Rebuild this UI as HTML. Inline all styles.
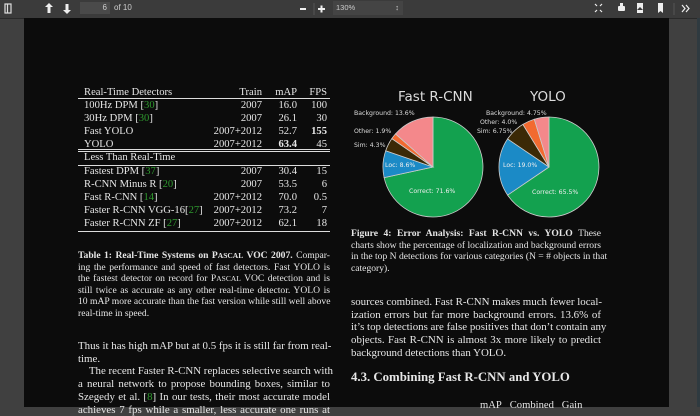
<!DOCTYPE html>
<html><head><style>
body{margin:0;width:700px;height:407px;overflow:hidden;background:#404040;font-family:"Liberation Serif",serif;color:#e6e6e6;position:relative}
#tb{position:absolute;left:0;top:0;width:700px;height:18px;background:#3b3b3b;border-bottom:1px solid #2a2a2a}
#pg{position:absolute;left:24px;top:18px;width:645px;height:389px;background:#0c0c0c}
.a{position:absolute;white-space:nowrap}
.t{font-size:10.6px;line-height:12.9px}
.r{text-align:right}
.g{color:#2f9a2f}
.hl{position:absolute;left:78px;width:252px;height:1px;background:#ddd}
.j div{text-align:justify;text-align-last:justify;white-space:nowrap}
.j div.l{text-align-last:left}
.cap{font-size:9.6px;line-height:11.6px}
.body{font-size:10.9px;line-height:12.7px}
</style></head><body>
<div id="tb">
<svg width="700" height="18" style="position:absolute;left:0;top:0">
<g fill="none" stroke="#ddd" stroke-width="1.2"><rect x="5" y="4" width="6" height="9"/><line x1="7.5" y1="4" x2="7.5" y2="13"/></g>
<g fill="#eee"><path d="M49 3l4 4h-2.5v6h-3v-6H45z"/><path d="M67 14l4-4h-2.5V4h-3v6H63z"/>
<rect x="300" y="8" width="6" height="2"/><rect x="318" y="8" width="7" height="2"/><rect x="320.5" y="5.5" width="2" height="7"/>
<rect x="618" y="6" width="7" height="5" rx="1"/><rect x="620" y="3" width="3" height="3"/>
<rect x="637" y="3" width="6" height="10"/><path d="M658 3h5v10l-2.5-2-2.5 2z"/>
<path d="M640 7l-3 3h6z" fill="#3b3b3b"/></g>
<g stroke="#eee" stroke-width="1.2" fill="none"><path d="M595 4l2 2M602 4l-2 2M595 12l2-2M602 12l-2-2"/><path d="M682 5l3 3.5-3 3.5M686 5l3 3.5-3 3.5"/></g>
<line x1="314" y1="3" x2="314" y2="15" stroke="#555"/><line x1="674" y1="3" x2="674" y2="15" stroke="#555"/>
</svg>
<div class="a" style="left:80px;top:2px;width:27px;height:12px;background:#4a4a4a;font:8px 'Liberation Sans',sans-serif;color:#ccc;text-align:right;padding-right:3px;line-height:12px">6</div>
<div class="a" style="left:114px;top:2px;font:8px 'Liberation Sans',sans-serif;color:#ccc;line-height:12px">of 10</div>
<div class="a" style="left:333px;top:1px;width:67px;height:14px;background:#444;font:7.5px 'Liberation Sans',sans-serif;color:#ccc;line-height:14px;padding-left:3px">130%<span style="position:absolute;right:4px">&#8597;</span></div>
</div>
<div id="pg"></div>
<div class="a" style="left:697px;top:18px;width:3px;height:389px;background:#2f3a40"></div>

<div class="hl" style="top:98px"></div>
<div class="hl" style="top:149px"></div><div class="hl" style="top:151px"></div>
<div class="hl" style="top:165px"></div>
<div class="hl" style="top:231px"></div>
<div class="a t" style="left:84px;top:87px">Real-Time Detectors<br>100Hz DPM [<span class="g">30</span>]<br>30Hz DPM [<span class="g">30</span>]<br>Fast YOLO<br>YOLO</div>
<div class="a t r" style="left:170px;top:87px;width:92px">Train<br>2007<br>2007<br>2007+2012<br>2007+2012</div>
<div class="a t r" style="left:262px;top:87px;width:35px">mAP<br>16.0<br>26.1<br>52.7<br><b>63.4</b></div>
<div class="a t r" style="left:297px;top:87px;width:30px">FPS<br>100<br>30<br><b>155</b><br>45</div>
<div class="a t" style="left:84px;top:152px">Less Than Real-Time</div>
<div class="a t" style="left:84px;top:166px">Fastest DPM [<span class="g">37</span>]<br>R-CNN Minus R [<span class="g">20</span>]<br>Fast R-CNN [<span class="g">14</span>]<br>Faster R-CNN VGG-16[<span class="g">27</span>]<br>Faster R-CNN ZF [<span class="g">27</span>]</div>
<div class="a t r" style="left:170px;top:166px;width:92px">2007<br>2007<br>2007+2012<br>2007+2012<br>2007+2012</div>
<div class="a t r" style="left:262px;top:166px;width:35px">30.4<br>53.5<br>70.0<br>73.2<br>62.1</div>
<div class="a t r" style="left:297px;top:166px;width:30px">15<br>6<br>0.5<br>7<br>18</div>

<div class="a cap j" style="left:78px;top:250px;width:252px">
<div><b>Table 1: Real-Time Systems on P<span style="font-size:7.5px">ASCAL</span> VOC 2007.</b> Compar-</div>
<div>ing the performance and speed of fast detectors. Fast YOLO is</div>
<div>the fastest detector on record for P<span style="font-size:7.5px">ASCAL</span> VOC detection and is</div>
<div>still twice as accurate as any other real-time detector. YOLO is</div>
<div>10 mAP more accurate than the fast version while still well above</div>
<div class="l">real-time in speed.</div></div>
<div class="a body j" style="left:78px;top:340px;width:252px">
<div>Thus it has high mAP but at 0.5 fps it is still far from real-</div>
<div class="l">time.</div>
<div>&nbsp;&nbsp;&nbsp;&nbsp;The recent Faster R-CNN replaces selective search with</div>
<div>a neural network to propose bounding boxes, similar to</div>
<div>Szegedy et al. [<span class="g">8</span>] In our tests, their most accurate model</div>
<div>achieves 7 fps while a smaller, less accurate one runs at</div></div>

<svg class="a" style="left:0;top:0" width="700" height="407">
<g stroke="#ccc" stroke-width="0.8">
<path d="M433 167L433 117A50 50 0 1 1 384.1 177.6Z" fill="#13a14f"/>
<path d="M433 167L384.1 177.6A50 50 0 0 1 385.7 150.7Z" fill="#1b8ac6"/>
<path d="M433 167L385.7 150.7A50 50 0 0 1 391.8 138.6Z" fill="#3b2906"/>
<path d="M433 167L391.8 138.6A50 50 0 0 1 395.5 133.9Z" fill="#f26a30"/>
<path d="M433 167L395.5 133.9A50 50 0 0 1 433 117Z" fill="#f4888b"/>
<path d="M549 167L549 117A50 50 0 1 1 507.6 195.1Z" fill="#13a14f"/>
<path d="M549 167L507.6 195.1A50 50 0 0 1 507.6 138.9Z" fill="#1b8ac6"/>
<path d="M549 167L507.6 138.9A50 50 0 0 1 522.9 124.4Z" fill="#3b2906"/>
<path d="M549 167L522.9 124.4A50 50 0 0 1 534.3 119.2Z" fill="#f26a30"/>
<path d="M549 167L534.3 119.2A50 50 0 0 1 549 117Z" fill="#f4888b"/>
</g>
<g font-family="DejaVu Sans,sans-serif" fill="#ddd">
<text x="398" y="101" font-size="13.5">Fast R-CNN</text>
<text x="530" y="101" font-size="13.5">YOLO</text>
<g font-size="6.2">
<text x="354" y="115">Background: 13.6%</text>
<text x="354" y="133">Other: 1.9%</text>
<text x="354" y="147">Sim: 4.3%</text>
<text x="486" y="115">Background: 4.75%</text>
<text x="480" y="124">Other: 4.0%</text>
<text x="477" y="133">Sim: 6.75%</text>
<text x="385" y="167" fill="#eee">Loc: 8.6%</text>
<text x="409" y="193" fill="#eee">Correct: 71.6%</text>
<text x="503" y="167" fill="#eee">Loc: 19.0%</text>
<text x="532" y="194" fill="#eee">Correct: 65.5%</text>
</g></g>
</svg>

<div class="a cap j" style="left:351px;top:228px;width:250px">
<div><b>Figure 4: Error Analysis: Fast R-CNN vs. YOLO</b> These</div>
<div>charts show the percentage of localization and background errors</div>
<div>in the top N detections for various categories (N = # objects in that</div>
<div class="l">category).</div></div>
<div class="a body j" style="left:351px;top:296px;width:250px">
<div>sources combined. Fast R-CNN makes much fewer local-</div>
<div>ization errors but far more background errors. 13.6% of</div>
<div>it’s top detections are false positives that don’t contain any</div>
<div>objects. Fast R-CNN is almost 3x more likely to predict</div>
<div class="l">background detections than YOLO.</div></div>
<div class="a" style="left:351px;top:370px;font-size:12.8px;font-weight:bold">4.3. Combining Fast R-CNN and YOLO</div>
<div class="a" style="left:480px;top:400px;font-size:10.6px">mAP&nbsp;&nbsp;&nbsp;Combined&nbsp;&nbsp;&nbsp;Gain</div>
</body></html>
